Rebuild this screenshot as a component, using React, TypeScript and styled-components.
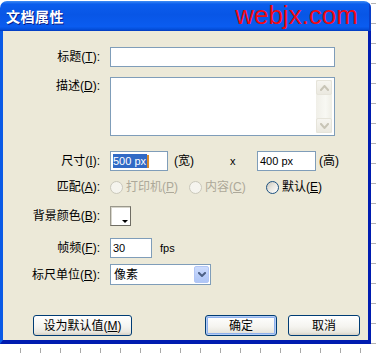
import React from 'react';
import styled, { createGlobalStyle } from 'styled-components';

const Global = createGlobalStyle`
  html, body { margin: 0; padding: 0; background: #ffffff; }
  body {
    width: 376px; height: 353px; overflow: hidden;
    font-family: Tahoma, "Liberation Sans", "Noto Sans CJK SC", sans-serif;
  }
`;

const UI_FONT = `Tahoma, "Liberation Sans", "Noto Sans CJK SC", sans-serif`;

const Page = styled.div`
  width: 376px;
  height: 353px;
  display: grid;
  grid-template-columns: 371px 5px;
  grid-template-rows: 1px 343px 9px;
  background: #ffffff;
`;

const RightRuler = styled.div`
  grid-column: 2;
  grid-row: 1 / 4;
  background: repeating-linear-gradient(
    to bottom,
    transparent 0 3px,
    #b4b4b4 3px 4px,
    transparent 4px 20px
  );
`;

const BottomRuler = styled.div`
  grid-column: 1;
  grid-row: 3;
  background-image: repeating-linear-gradient(
    to right,
    #a8a8a8 0 1px,
    transparent 1px 20px
  );
  background-repeat: no-repeat;
  background-position: 20px 4px;
  background-size: 100% 5px;
`;

const Dialog = styled.div`
  grid-column: 1;
  grid-row: 2;
  display: flex;
  flex-direction: column;
  border-radius: 7px 7px 0 0;
  overflow: hidden;
`;

const TitleBar = styled.div`
  height: 30px;
  flex: none;
  display: flex;
  align-items: center;
  padding: 0 13px 0 6px;
  background: linear-gradient(
    to bottom,
    #3f8cf3 0%,
    #0b5ded 10%,
    #0856e6 45%,
    #0a5cf0 85%,
    #0450dc 94%,
    #0339bd 100%
  );
  box-shadow: inset -2px 0 0 #0a3fc8;
`;

const TitleText = styled.span`
  font-family: "Noto Sans CJK SC", sans-serif;
  font-weight: 700;
  font-size: 14px;
  line-height: 16px;
  color: #ffffff;
  text-shadow: 1px 1px 0 #0a1e8a;
  letter-spacing: 0.5px;
`;

const Watermark = styled.span`
  margin-left: auto;
  font-family: "Liberation Sans", Arial, sans-serif;
  font-size: 26px;
  line-height: 26px;
  color: #f20a12;
  margin-top: -2px;
`;

const Body = styled.div`
  flex: 1;
  display: flex;
  flex-direction: column;
  background: #ece9d8;
  border-left: 3px solid #0a5ae6;
  border-right: 3px solid #001cb0;
  border-bottom: 4px solid #001cb0;
`;

const Row = styled.div<{ $mt: number; $top?: boolean }>`
  display: grid;
  grid-template-columns: 97px 1fr;
  column-gap: 10px;
  align-items: ${p => (p.$top ? 'start' : 'center')};
  margin-top: ${p => p.$mt}px;
  padding-right: 33px;
`;

const Label = styled.span<{ $offset?: number }>`
  text-align: right;
  white-space: nowrap;
  font-family: ${UI_FONT};
  font-size: 12px;
  line-height: 14px;
  color: #000000;
  margin-top: ${p => p.$offset ?? 0}px;
`;

const Field = styled.div<{ $w?: number }>`
  box-sizing: border-box;
  height: 20px;
  width: ${p => (p.$w ? `${p.$w}px` : '100%')};
  border: 1px solid #7f9db9;
  background: #ffffff;
  display: flex;
  align-items: center;
  padding: 0 2px;
  font-family: "Liberation Sans", Tahoma, sans-serif;
  font-size: 11px;
  color: #000000;
  white-space: nowrap;
`;

const Selection = styled.span`
  background: #316ac5;
  color: #ffffff;
  line-height: 14px;
  padding: 0 1px 0 0;
`;

const Caret = styled.span`
  width: 2px;
  height: 13px;
  background: #d98a2a;
`;

const Memo = styled.div`
  box-sizing: border-box;
  height: 59px;
  border: 1px solid #7f9db9;
  background: #ffffff;
  display: flex;
  justify-content: flex-end;
  padding: 2px 2px 2px 0;
`;

const ScrollBar = styled.div`
  width: 16px;
  display: flex;
  flex-direction: column;
  justify-content: space-between;
  background: linear-gradient(to right, #f0efe8, #f8f8f3 60%, #efeee6);
`;

const ScrollButton = styled.div`
  box-sizing: border-box;
  height: 15px;
  width: 16px;
  border: 1px solid #e6e4da;
  border-radius: 2px;
  background: linear-gradient(to bottom, #f6f5f0, #ebe9e0);
  display: flex;
  align-items: center;
  justify-content: center;
`;

const SizeGroup = styled.div`
  display: grid;
  grid-template-columns: 58px 62px 27px 59px auto;
  align-items: center;
`;

const Unit = styled.span<{ $pl: number }>`
  padding-left: ${p => p.$pl}px;
  font-family: ${UI_FONT};
  font-size: 12px;
  line-height: 14px;
  white-space: nowrap;
`;

const Times = styled.span`
  font-family: "Liberation Sans", Tahoma, sans-serif;
  font-size: 11px;
  line-height: 14px;
`;

const RadioGroup = styled.div`
  display: flex;
  align-items: center;
  height: 16px;
`;

const RadioItem = styled.label<{ $w?: number; $disabled?: boolean }>`
  display: flex;
  align-items: center;
  width: ${p => (p.$w ? `${p.$w}px` : 'auto')};
  font-family: ${UI_FONT};
  font-size: 12px;
  line-height: 14px;
  white-space: nowrap;
  color: ${p => (p.$disabled ? '#aca899' : '#000000')};
`;

const RadioCircle = styled.span<{ $disabled?: boolean }>`
  box-sizing: border-box;
  width: 13px;
  height: 13px;
  border-radius: 50%;
  margin-right: 3px;
  flex: none;
  border: 1px solid ${p => (p.$disabled ? '#cac8bb' : '#1c5180')};
  background: ${p =>
    p.$disabled
      ? '#f5f4ee'
      : 'linear-gradient(135deg, #c9c6ba 0%, #e8e6df 45%, #ffffff 100%)'};
`;

const Swatch = styled.div`
  box-sizing: border-box;
  position: relative;
  width: 21px;
  height: 20px;
  border: 1px solid #9a988c;
  border-right-color: #6f6d64;
  border-bottom-color: #6f6d64;
  background: #ffffff;
  box-shadow: inset 1px 1px 0 #d8d6cc;

  &::after {
    content: '';
    position: absolute;
    right: 2px;
    bottom: 2px;
    border-left: 3px solid transparent;
    border-right: 3px solid transparent;
    border-top: 3px solid #000000;
  }
`;

const Inline = styled.div`
  display: flex;
  align-items: center;
`;

const Select = styled.div`
  box-sizing: border-box;
  width: 101px;
  height: 21px;
  border: 1px solid #7f9db9;
  background: #ffffff;
  display: flex;
  align-items: center;
  padding: 1px;
  font-family: ${UI_FONT};
  font-size: 12px;
`;

const SelectText = styled.span`
  flex: 1;
  padding-left: 2px;
  line-height: 14px;
`;

const DropButton = styled.div`
  box-sizing: border-box;
  width: 15px;
  height: 17px;
  border: 1px solid #b2c6f5;
  border-radius: 2px;
  background: linear-gradient(to bottom, #cddcfd 0%, #b9cdf9 60%, #afc6f6 100%);
  display: flex;
  align-items: center;
  justify-content: center;
`;

const ButtonRow = styled.div`
  display: flex;
  align-items: center;
  margin-top: 30px;
  padding: 0 8px 0 30px;
`;

const Button = styled.button<{ $w: number; $default?: boolean; $push?: boolean }>`
  box-sizing: border-box;
  width: ${p => p.$w}px;
  height: 21px;
  margin-left: ${p => (p.$push ? 'auto' : '0')};
  border: 1px solid #003c74;
  border-radius: 3px;
  padding: 0;
  background: linear-gradient(
    to bottom,
    #ffffff 0%,
    #f5f4f0 55%,
    #e9e7df 85%,
    #d6d0c5 100%
  );
  box-shadow: ${p =>
    p.$default
      ? 'inset 0 0 0 1px #b5cdf5, inset 0 0 0 2px #8eb0ec'
      : 'none'};
  font-family: ${UI_FONT};
  font-size: 12px;
  line-height: 14px;
  color: #000000;
  cursor: default;
`;

const Gap = styled.span<{ $w: number }>`
  display: inline-block;
  width: ${p => p.$w}px;
`;

const Chevron = ({ up, color, w = 7, h = 4, sw = 2 }: { up?: boolean; color: string; w?: number; h?: number; sw?: number }) => (
  <svg width={w + 2} height={h + 2} viewBox={`0 0 ${w + 2} ${h + 2}`}>
    <polyline
      points={
        up
          ? `1,${h + 1} ${(w + 2) / 2},1 ${w + 1},${h + 1}`
          : `1,1 ${(w + 2) / 2},${h + 1} ${w + 1},1`
      }
      fill="none"
      stroke={color}
      strokeWidth={sw}
      strokeLinecap="square"
    />
  </svg>
);

export default function App() {
  return (
    <>
      <Global />
      <Page>
        <Dialog>
          <TitleBar>
            <TitleText>文档属性</TitleText>
            <Watermark>webjx.com</Watermark>
          </TitleBar>
          <Body>
            <Row $mt={16}>
              <Label>标题(<u>T</u>):</Label>
              <Field />
            </Row>

            <Row $mt={10} $top>
              <Label $offset={2}>描述(<u>D</u>):</Label>
              <Memo>
                <ScrollBar>
                  <ScrollButton>
                    <Chevron up color="#c8c5b7" />
                  </ScrollButton>
                  <ScrollButton>
                    <Chevron color="#c8c5b7" />
                  </ScrollButton>
                </ScrollBar>
              </Memo>
            </Row>

            <Row $mt={15}>
              <Label>尺寸(<u>I</u>):</Label>
              <SizeGroup>
                <Field $w={58}>
                  <Selection>500 px</Selection>
                  <Caret />
                </Field>
                <Unit $pl={6}>(宽)</Unit>
                <Times>x</Times>
                <Field $w={59}>400 px</Field>
                <Unit $pl={3}>(高)</Unit>
              </SizeGroup>
            </Row>

            <Row $mt={8}>
              <Label>匹配(<u>A</u>):</Label>
              <RadioGroup>
                <RadioItem $w={79} $disabled>
                  <RadioCircle $disabled />
                  打印机(<u>P</u>)
                </RadioItem>
                <RadioItem $w={77} $disabled>
                  <RadioCircle $disabled />
                  内容(<u>C</u>)
                </RadioItem>
                <RadioItem>
                  <RadioCircle />
                  默认(<u>E</u>)
                </RadioItem>
              </RadioGroup>
            </Row>

            <Row $mt={11}>
              <Label>背景颜色(<u>B</u>):</Label>
              <Inline>
                <Swatch />
              </Inline>
            </Row>

            <Row $mt={12}>
              <Label>帧频(<u>F</u>):</Label>
              <Inline>
                <Field $w={42}>30</Field>
                <Gap $w={8} />
                <Times>fps</Times>
              </Inline>
            </Row>

            <Row $mt={6}>
              <Label>标尺单位(<u>R</u>):</Label>
              <Inline>
                <Select>
                  <SelectText>像素</SelectText>
                  <DropButton>
                    <Chevron color="#4d6185" w={6} h={3} />
                  </DropButton>
                </Select>
              </Inline>
            </Row>

            <ButtonRow>
              <Button $w={99}>设为默认值(<u>M</u>)</Button>
              <Button $w={72} $default $push>确定</Button>
              <Gap $w={11} />
              <Button $w={72}>取消</Button>
            </ButtonRow>
          </Body>
        </Dialog>
        <RightRuler />
        <BottomRuler />
      </Page>
    </>
  );
}
